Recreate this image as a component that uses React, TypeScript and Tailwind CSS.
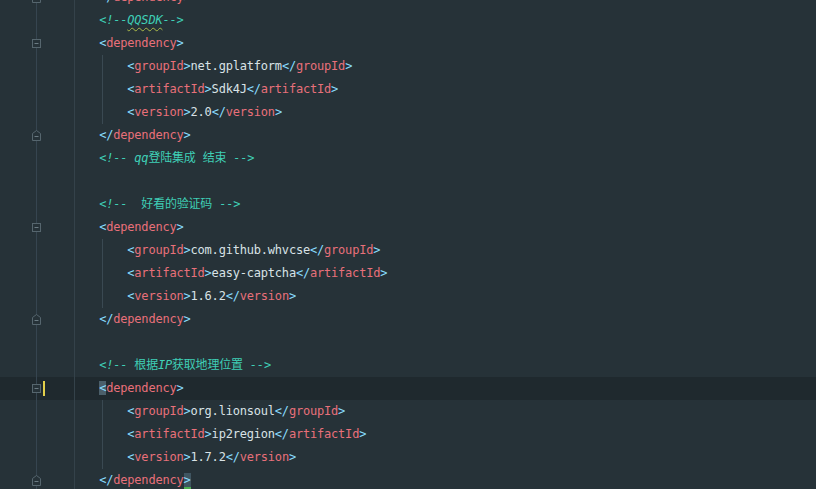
import type { ReactNode } from "react";

type Seg = [string, string];

const br = "text-[#89ddff]";
const tag = "text-[#e8707a]";
const txt = "text-[#d9e2e6]";
const cm = "text-[#3fcfb6]";
const cmi = "text-[#3fcfb6] italic";

const open = (name: string): Seg[] => [["<", br], [name, tag], [">", br]];
const close = (name: string): Seg[] => [["</", br], [name, tag], [">", br]];
const el = (name: string, value: string): Seg[] => [...open(name), [value, txt], ...close(name)];

type Line = {
  indent: number;
  segs: Seg[];
  fold?: "start" | "end";
  guide?: boolean;
  current?: boolean;
  custom?: ReactNode;
};

const lines: Line[] = [
  { indent: 2, segs: close("dependency"), fold: "end" },
  { indent: 2, segs: [] },
  { indent: 2, segs: open("dependency"), fold: "start" },
  { indent: 3, segs: el("groupId", "net.gplatform"), guide: true },
  { indent: 3, segs: el("artifactId", "Sdk4J"), guide: true },
  { indent: 3, segs: el("version", "2.0"), guide: true },
  { indent: 2, segs: close("dependency"), fold: "end" },
  {
    indent: 2,
    segs: [
      ["<!--", cmi],
      [" ", cm],
      ["qq", cmi],
      ["登陆集成 结束 ", cm],
      ["-->", cmi],
    ],
  },
  { indent: 0, segs: [] },
  {
    indent: 2,
    segs: [
      ["<!--", cmi],
      ["  好看的验证码 ", cm],
      ["-->", cmi],
    ],
  },
  { indent: 2, segs: open("dependency"), fold: "start" },
  { indent: 3, segs: el("groupId", "com.github.whvcse"), guide: true },
  { indent: 3, segs: el("artifactId", "easy-captcha"), guide: true },
  { indent: 3, segs: el("version", "1.6.2"), guide: true },
  { indent: 2, segs: close("dependency"), fold: "end" },
  { indent: 0, segs: [] },
  {
    indent: 2,
    segs: [
      ["<!--", cmi],
      [" 根据", cm],
      ["IP", cmi],
      ["获取地理位置 ", cm],
      ["-->", cmi],
    ],
  },
  { indent: 2, segs: [], fold: "start", current: true },
  { indent: 3, segs: el("groupId", "org.lionsoul"), guide: true },
  { indent: 3, segs: el("artifactId", "ip2region"), guide: true },
  { indent: 3, segs: el("version", "1.7.2"), guide: true },
  { indent: 2, segs: [], fold: "end" },
];

function FoldStart() {
  return (
    <svg width="9" height="9" viewBox="0 0 9 9" className="absolute left-[32px] top-[7px]">
      <rect x="0.5" y="0.5" width="8" height="8" fill="#263238" stroke="#56666e" />
      <path d="M2.5 4.5h4" stroke="#6b7b83" />
    </svg>
  );
}

function FoldEnd() {
  return (
    <svg width="9" height="11" viewBox="0 0 9 11" className="absolute left-[32px] top-[6px]">
      <path d="M0.5 3.5L4.5 0.5L8.5 3.5V10.5H0.5Z" fill="#263238" stroke="#56666e" />
      <path d="M2.5 6.5h4" stroke="#6b7b83" />
    </svg>
  );
}

function Code({ line, index }: { line: Line; index: number }) {
  const pad = " ".repeat(line.indent * 4);
  if (index === 1) {
    return (
      <span>
        {pad}
        <span className={cmi}>{"<!--"}</span>
        <span className={`${cmi} underline decoration-wavy decoration-[#a9b84a] decoration-1 underline-offset-[3px]`}>
          QQSDK
        </span>
        <span className={cmi}>{"-->"}</span>
      </span>
    );
  }
  if (index === 17) {
    return (
      <span>
        {pad}
        <span className="bg-[#4b5f6a] text-[#89ddff]">{"<"}</span>
        <span className={tag}>dependency</span>
        <span className={br}>{">"}</span>
      </span>
    );
  }
  if (index === 21) {
    return (
      <span>
        {pad}
        <span className={br}>{"</"}</span>
        <span className={tag}>dependency</span>
        <span className="bg-[#3f5561] text-[#89ddff] border-b-2 border-[#4caf50]">{">"}</span>
      </span>
    );
  }
  return (
    <span>
      {pad}
      {line.segs.map(([t, c], i) => (
        <span key={i} className={c}>
          {t}
        </span>
      ))}
    </span>
  );
}

export default function App() {
  return (
    <div className="h-[489px] w-[816px] overflow-hidden bg-[#263238]">
      <div className="mt-[-14px] flex flex-col">
        {lines.map((line, i) => (
          <div
            key={i}
            className={`flex h-[23px] shrink-0 ${line.current ? "bg-[#1f292e]" : ""}`}
          >
            <div className="relative h-full w-[43px] shrink-0">
              <div className="absolute left-[36px] top-0 h-full w-px bg-[#364550]" />
              {line.fold === "start" && <FoldStart />}
              {line.fold === "end" && <FoldEnd />}
              {line.current && (
                <div className="absolute left-[43px] top-[4px] h-[15px] w-[2px] bg-[#e3d04b]" />
              )}
            </div>
            <div className="relative h-full flex-1 whitespace-pre font-['DejaVu_Sans_Mono','Noto_Sans_CJK_SC',monospace] text-[12px] tracking-[-0.2px] leading-[23px]">
              <div className="absolute left-[31px] top-0 h-full w-px bg-[#34424a]" />
              {line.guide && <div className="absolute left-[59px] top-0 h-full w-px bg-[#3a4952]" />}
              <Code line={line} index={i} />
            </div>
          </div>
        ))}
      </div>
    </div>
  );
}
